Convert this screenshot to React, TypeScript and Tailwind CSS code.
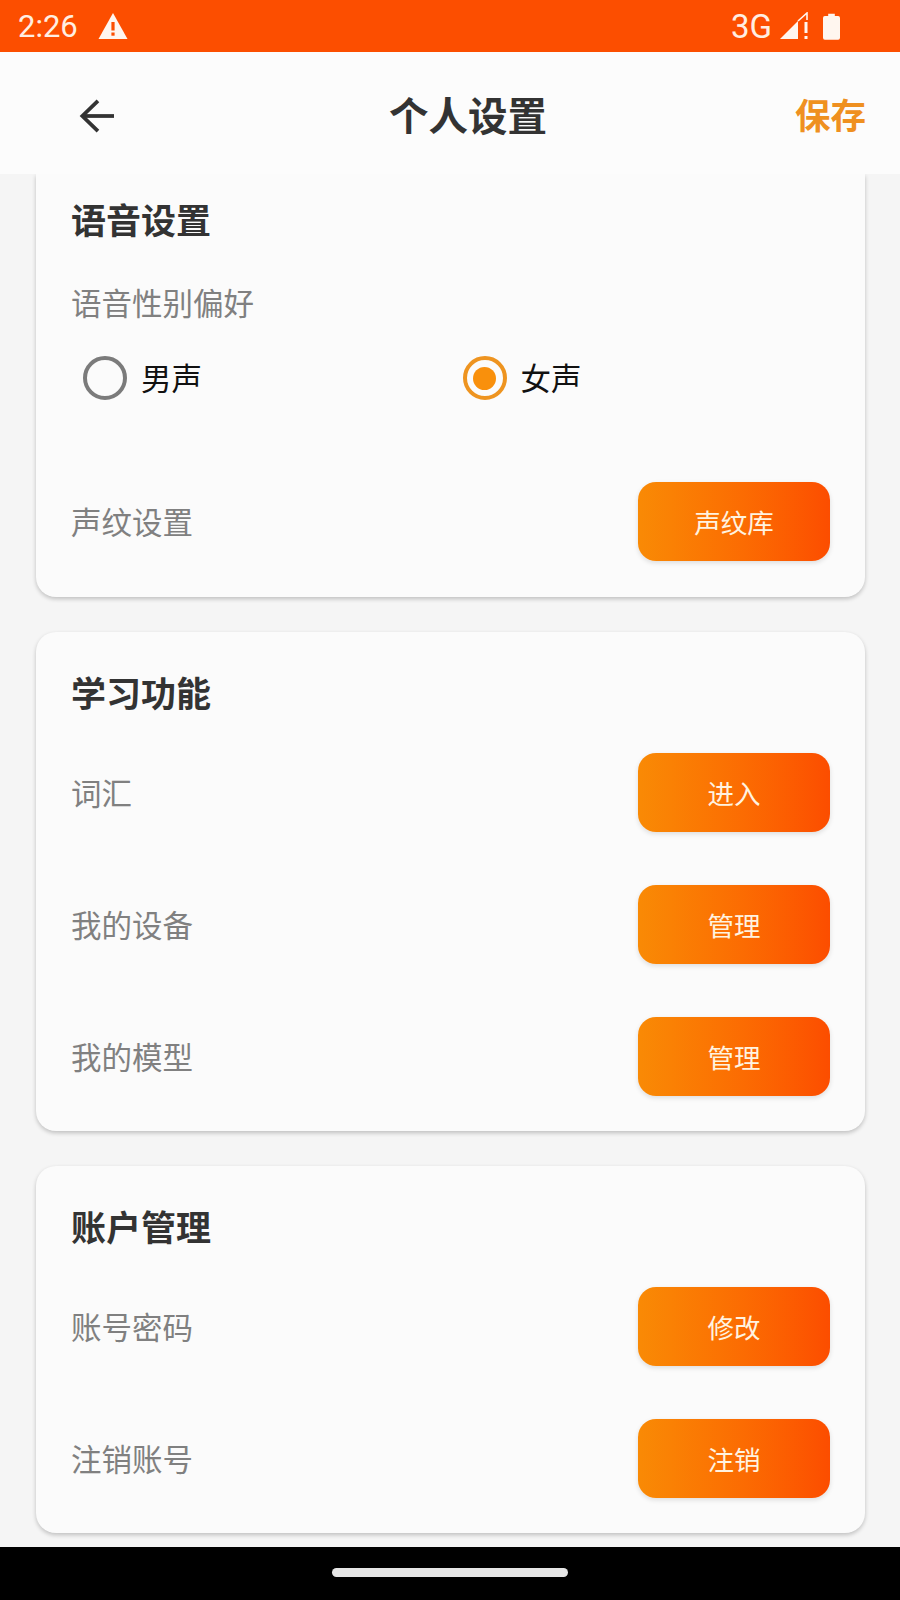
const FONT = "font-['Noto_Sans_CJK_SC','Noto_Sans',sans-serif]";

function Row({ label, action }: { label: string; action: string }) {
  return (
    <div className="flex items-center justify-between">
      <span className="pb-[2px] text-[30.5px] leading-[40px] text-[#808080]">{label}</span>
      <button className="flex h-[79px] w-[192px] items-center justify-center rounded-[18px] bg-gradient-to-r from-[#f98a05] to-[#fc4d00] text-[26.5px] text-[#fff3e0] shadow-[0_2px_5px_rgba(0,0,0,0.12)]">
        {action}
      </button>
    </div>
  );
}

function Radio({ label, checked }: { label: string; checked?: boolean }) {
  return (
    <div className="flex flex-1 items-center gap-[14px] pl-[12px]">
      <span
        className={
          checked
            ? 'flex h-[44px] w-[44px] items-center justify-center rounded-full border-[4px] border-[#ee9420]'
            : 'flex h-[44px] w-[44px] items-center justify-center rounded-full border-[4px] border-[#7b7b7b]'
        }
      >
        {checked && <span className="h-[23px] w-[23px] rounded-full bg-[#f9900c]" />}
      </span>
      <span className="pb-[3px] text-[30.5px] leading-[40px] text-[#111]">{label}</span>
    </div>
  );
}

function StatusBar() {
  return (
    <div className="flex h-[52px] items-center justify-between bg-[#fc4e00] pl-[18px] pr-[60px] font-['Roboto',sans-serif] text-[31px] text-[#ffeee2]">
      <div className="flex items-center gap-[20px]">
        <span className="leading-none">2:26</span>
        <svg width="30" height="26" viewBox="0 0 30 26">
          <path d="M15 0 L29.5 26 H0.5 Z" fill="#fff6ef" />
          <rect x="13.4" y="9" width="3.2" height="8.5" fill="#fc4e00" />
          <rect x="13.4" y="19.5" width="3.2" height="3.2" fill="#fc4e00" />
        </svg>
      </div>
      <div className="flex items-center">
        <span className="mr-[8px] text-[33px] leading-none">3G</span>
        <svg width="29" height="28" viewBox="0 0 29 28" className="mr-[14px]">
          <path d="M0 27 L18 9 V27 Z" fill="#fff6ef" />
          <path d="M18 9 L27 1 V8" stroke="#fff6ef" strokeWidth="1.6" fill="none" />
          <rect x="24.5" y="10" width="3" height="11" fill="#fff6ef" />
          <rect x="24.5" y="24" width="3" height="3" fill="#fff6ef" />
        </svg>
        <svg width="17" height="27" viewBox="0 0 18 28">
          <path d="M5.5 0.5 H12.5 V3 H16 A2 2 0 0 1 18 5 V26 A2 2 0 0 1 16 28 H2 A2 2 0 0 1 0 26 V5 A2 2 0 0 1 2 3 H5.5 Z" fill="#fff6ef" />
        </svg>
      </div>
    </div>
  );
}

export default function App() {
  return (
    <div className={`flex h-[1600px] w-[900px] flex-col overflow-hidden bg-[#f5f5f5] ${FONT}`}>
      <StatusBar />

      <header className="relative flex h-[122px] items-center justify-between bg-[#fcfcfc] pl-[79px] pr-[34px]">
        <svg width="36" height="34" viewBox="0 0 38 36" fill="none" stroke="#333" strokeWidth="4" className="mt-[5px]">
          <path d="M37 18 H4" />
          <path d="M20 2 L3.5 18 L20 34" />
        </svg>
        <h1 className="absolute left-[389px] top-[36px] text-[39.5px] font-bold leading-[52px] text-[#333]">
          个人设置
        </h1>
        <span className="pt-[2px] text-[35.5px] font-bold leading-[48px] text-[#ef9020]">保存</span>
      </header>

      <main className="flex flex-1 flex-col gap-[35px] overflow-hidden pl-[36px] pr-[35px]">
        <section className="flex flex-col rounded-b-[20px] bg-[#fbfbfb] pb-[36px] pl-[35px] pr-[35px] pt-[22px] shadow-[0_2px_4px_rgba(0,0,0,0.22)]">
          <h2 className="text-[35px] font-bold leading-[46px] text-[#333]">语音设置</h2>
          <div className="mt-[40px] text-[30.5px] leading-[40px] text-[#808080]">语音性别偏好</div>
          <div className="mt-[34px] flex">
            <Radio label="男声" />
            <Radio label="女声" checked />
          </div>
          <div className="mt-[82px]">
            <Row label="声纹设置" action="声纹库" />
          </div>
        </section>

        <section className="flex flex-col rounded-[20px] bg-[#fbfbfb] pb-[35px] pl-[35px] pr-[35px] pt-[37px] shadow-[0_2px_4px_rgba(0,0,0,0.22)]">
          <h2 className="mb-[38px] text-[35px] font-bold leading-[46px] text-[#333]">学习功能</h2>
          <div className="flex flex-col gap-[53px]">
            <Row label="词汇" action="进入" />
            <Row label="我的设备" action="管理" />
            <Row label="我的模型" action="管理" />
          </div>
        </section>

        <section className="flex flex-col rounded-[20px] bg-[#fbfbfb] pb-[35px] pl-[35px] pr-[35px] pt-[37px] shadow-[0_2px_4px_rgba(0,0,0,0.22)]">
          <h2 className="mb-[38px] text-[35px] font-bold leading-[46px] text-[#333]">账户管理</h2>
          <div className="flex flex-col gap-[53px]">
            <Row label="账号密码" action="修改" />
            <Row label="注销账号" action="注销" />
          </div>
        </section>
      </main>

      <div className="flex h-[53px] items-center justify-center bg-black">
        <div className="mb-[2px] h-[9px] w-[236px] rounded-full bg-[#e6e6e6]" />
      </div>
    </div>
  );
}
